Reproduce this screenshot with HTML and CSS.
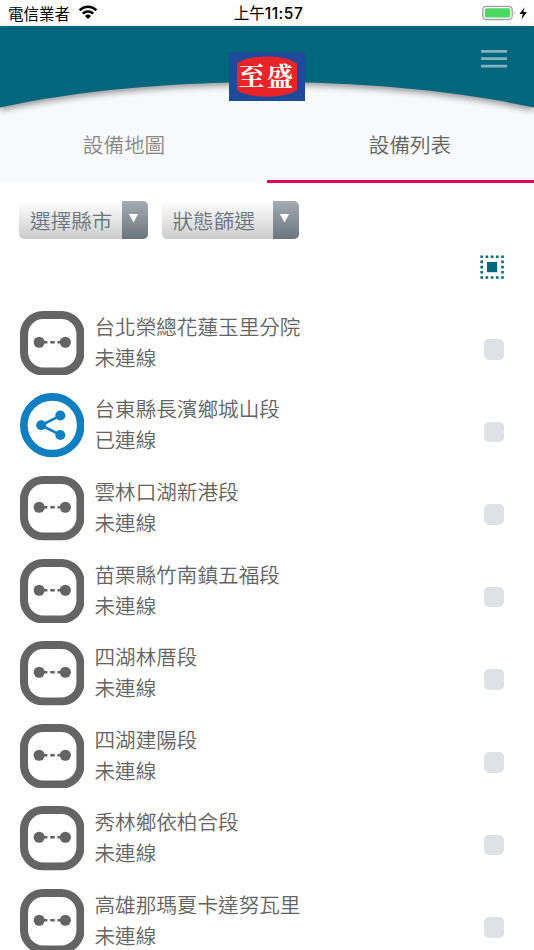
FILE: index.html
```html
<!DOCTYPE html>
<html lang="zh-Hant">
<head>
<meta charset="utf-8">
<title>設備列表</title>
<link rel="stylesheet" href="styles.css">
</head>
<body>
<svg class="defs" aria-hidden="true">
  <symbol id="offline" viewBox="0 0 64 64">
    <rect x="4" y="4" width="56" height="56" rx="19" fill="#fff" stroke="#646464" stroke-width="8"/>
    <g fill="#646464"><circle cx="19" cy="31" r="5.5"/><circle cx="45" cy="31" r="5.5"/>
    <path d="M22 29.800h5.200v2.400H22zM30 29.800h4.500v2.400H30zM37.200 29.800H43v2.400h-5.800z"/></g>
  </symbol>
  <symbol id="online" viewBox="0 0 64 64">
    <circle cx="32" cy="32" r="28.200" fill="#fff" stroke="#0f7fc1" stroke-width="7.600"/>
    <path d="M40 22.500 21 32l19 9.500" fill="none" stroke="#0f7fc1" stroke-width="2.600"/>
    <g fill="#0f7fc1"><circle cx="40" cy="22.300" r="5"/><circle cx="21" cy="32" r="5"/><circle cx="40" cy="41.700" r="5"/></g>
  </symbol>
</svg>
<div class="status-bar">
  <div class="carrier">電信業者
    <svg width="20" height="15" viewBox="0 0 20 15"><g fill="none" stroke="#000" stroke-width="2.500"><path d="M1.600 5.300a12 12 0 0 1 16.800 0"/><path d="M4.800 8.600a7.500 7.500 0 0 1 10.400 0"/></g><path d="M7 10.900a4.300 4.300 0 0 1 6 0L10 14z"/></svg>
  </div>
  <div class="clock">上午<span>11:57</span></div>
  <div class="power">
    <svg width="46" height="16" viewBox="0 0 46 16"><rect x=".8" y="1.300" width="29.400" height="13.200" rx="3.500" fill="#fff" stroke="#a2a2a2" stroke-width="1.300"/><rect x="2.800" y="3.200" width="25.400" height="9.400" rx="1.500" fill="#4cd964"/><path d="M31.800 5.800q1.800 2 0 4.200z" fill="#999"/><path d="M42.700 2.200 37.400 9h3.500l-1.500 5.500L44.900 7h-3.600z"/></svg>
  </div>
</div>
<header class="header">
  <svg class="curve" width="534" height="94" viewBox="0 0 534 94"><path d="M0 0H534V81.500C379 47.500 155 47.500 0 81.500Z" fill="#00677d"/></svg>
  <svg class="logo" width="76" height="49" viewBox="0 0 76 49"><path fill="#1d4a9b" d="M0 0h76v49H0z"/><path fill="#e82429" d="M8 11.500C20 2 56 2 68 11.500V38C56 47 20 47 8 38z"/><text class="logo-text" x="9.500" y="33.500">至盛</text></svg>
  <svg class="menu" width="26" height="18" viewBox="0 0 26 18"><path fill="#80b3be" d="M0 0h26v2.700H0zM0 7.300h26V10H0zM0 14.700h26v2.700H0z"/></svg>
</header>
<nav class="tabs"><div class="tab">設備地圖</div><div class="tab active">設備列表</div></nav>
<div class="filters">
  <div class="select city"><span>選擇縣市</span><i><svg width="9" height="9"><path d="M0 0h9L4.500 8.500z" fill="#fff"/></svg></i></div>
  <div class="select state"><span>狀態篩選</span><i><svg width="9" height="9"><path d="M0 0h9L4.500 8.500z" fill="#fff"/></svg></i></div>
</div>
<div class="tools">
  <svg width="24" height="24" viewBox="0 0 24 24"><g fill="none" stroke="#00677d" stroke-width="2.600"><path stroke-dasharray="2.600 2.600" d="M.4 1.700h23.400M.4 22.500h23.400M1.700 .4v23.400M22.500 .4v23.400"/></g><path fill="#00677d" d="M7 7h10.200v10.200H7z"/></svg>
</div>
<main class="list">
  <div class="row"><svg class="icon"><use href="#offline"/></svg><div class="info"><p>台北榮總花蓮玉里分院</p><p>未連線</p></div><span class="check"></span></div>
  <div class="row"><svg class="icon"><use href="#online"/></svg><div class="info"><p>台東縣長濱鄉城山段</p><p>已連線</p></div><span class="check"></span></div>
  <div class="row"><svg class="icon"><use href="#offline"/></svg><div class="info"><p>雲林口湖新港段</p><p>未連線</p></div><span class="check"></span></div>
  <div class="row"><svg class="icon"><use href="#offline"/></svg><div class="info"><p>苗栗縣竹南鎮五福段</p><p>未連線</p></div><span class="check"></span></div>
  <div class="row"><svg class="icon"><use href="#offline"/></svg><div class="info"><p>四湖林厝段</p><p>未連線</p></div><span class="check"></span></div>
  <div class="row"><svg class="icon"><use href="#offline"/></svg><div class="info"><p>四湖建陽段</p><p>未連線</p></div><span class="check"></span></div>
  <div class="row"><svg class="icon"><use href="#offline"/></svg><div class="info"><p>秀林鄉依柏合段</p><p>未連線</p></div><span class="check"></span></div>
  <div class="row"><svg class="icon"><use href="#offline"/></svg><div class="info"><p>高雄那瑪夏卡達努瓦里</p><p>未連線</p></div><span class="check"></span></div>
</main>
</body>
</html>
```
FILE: styles.css
```css
* { box-sizing: border-box; }
body {
  margin: 0;
  height: 950px;
  overflow: hidden;
  background: #fff;
  color: #646464;
  font: 350 20.6px/30.9px "Noto Sans CJK TC", sans-serif;
}
svg { display: block; }
p { margin: 0; }
.defs { position: absolute; width: 0; height: 0; }
.status-bar {
  display: grid;
  grid-template-columns: 1fr auto 1fr;
  height: 26px;
  align-items: center;
  padding: 0 6px 0 8px;
  color: #000;
  font-size: 15.5px;
  font-weight: 400;
  line-height: 25px;
}
.carrier { display: flex; align-items: center; gap: 8px; }
.carrier svg { margin-top: -1px; }
.clock { padding-left: 1px; font-size: 15.5px; }
.clock span { font-family: Inter, sans-serif; font-weight: 500; font-size: 15.5px; letter-spacing: .5px; }
.power { justify-self: end; margin-top: -1px; }
.header {
  position: relative;
  display: flex;
  justify-content: center;
  height: 82px;
  padding-top: 26px;
  background: #f8f9fb;
}
.curve { position: absolute; left: 0; top: 0; filter: drop-shadow(0 3px 3px rgba(0, 0, 0, .4)); }
.logo { position: relative; }
.logo-text { font: 700 26px "Noto Serif CJK TC", "Noto Sans CJK TC", serif; letter-spacing: 2.5px; fill: #fff; }
.menu { position: absolute; right: 27px; top: 24px; }
.tabs { display: flex; height: 75.400px; background: #f8f9fb; }
.tab { flex: 1; padding: 21px 19px 0 0; text-align: center; color: #888; }
.tab.active { padding-left: 19px; padding-right: 0; color: #646464; border-bottom: 3px solid #e40050; }
.filters { display: flex; gap: 14px; padding: 17.600px 19px 0; height: 56px; }
.select {
  display: flex;
  height: 38.500px;
  border-radius: 5px;
  overflow: hidden;
  background: linear-gradient(#fff, #ccc);
  color: #6c757d;
  line-height: 39px;
}
.city { width: 129px; }
.state { width: 137.500px; margin-left: -.500px; }
.select span { flex: 1; padding-left: 11px; white-space: nowrap; }
.select i {
  display: flex;
  justify-content: center;
  width: 26px;
  padding: 13px 3px 0 0;
  background: linear-gradient(#a5acb2, #6c757d);
}
.tools { display: flex; justify-content: flex-end; height: 71px; padding: 15.500px 30px 0; }
.list { display: flex; flex-direction: column; }
.row { display: flex; flex: none; height: 82.600px; padding: .500px 29.800px 0 19.500px; }
.icon { flex: none; width: 64.500px; height: 64.500px; }
.info { flex: 1; padding-left: 10.500px; }
.check { width: 20.600px; height: 20.600px; margin-top: 28.200px; border-radius: 5px; background: #dee2e6; }
```
